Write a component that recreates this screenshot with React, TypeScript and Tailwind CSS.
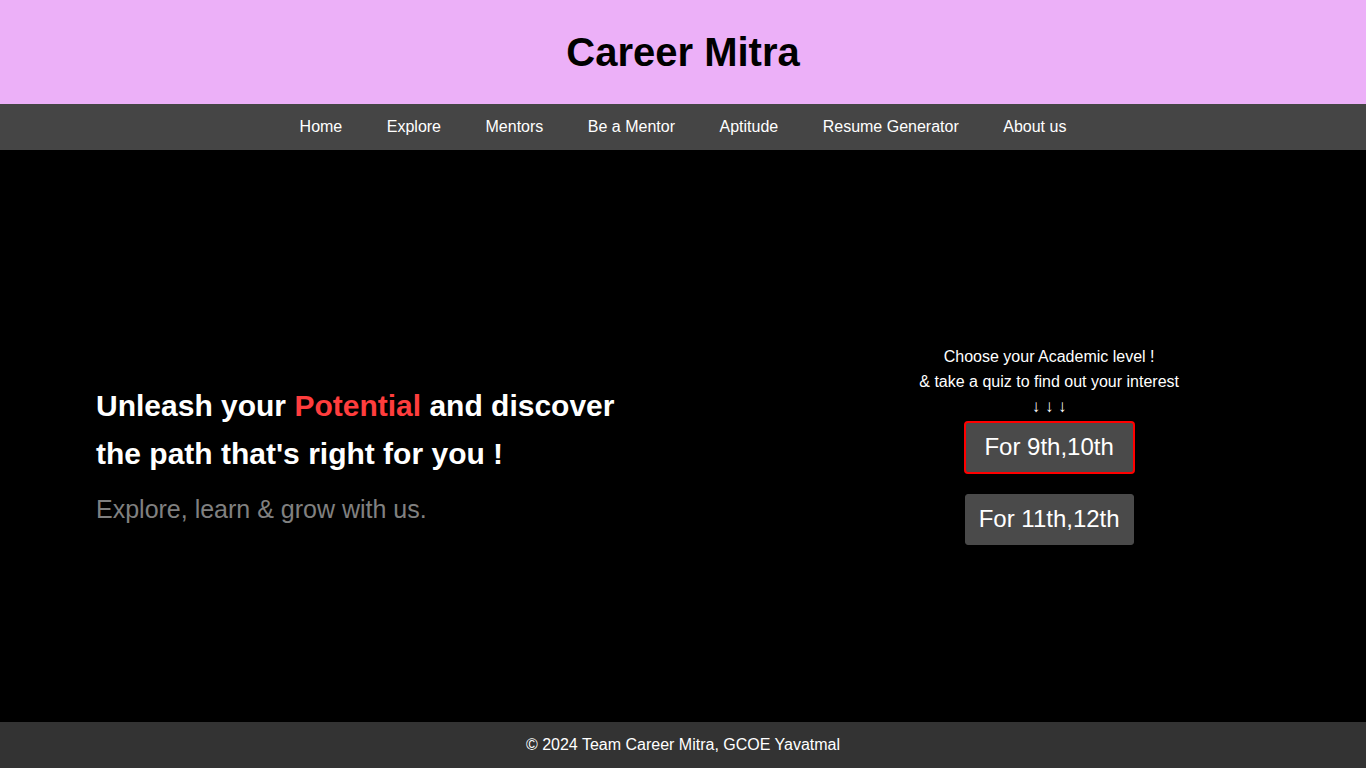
import React from 'react';

const navLinks = ['Home', 'Explore', 'Mentors', 'Be a Mentor', 'Aptitude', 'Resume Generator', 'About us'];

export default function App() {
  return (
    <div className="min-h-screen flex flex-col bg-black font-['Liberation_Sans',Arial,sans-serif]">
      {/* Header */}
      <header className="h-[104px] bg-[#ecb0f8] flex items-center justify-center">
        <h1 className="text-[40px] font-bold text-black leading-none">Career Mitra</h1>
      </header>

      {/* Nav */}
      <nav className="h-[46px] bg-[#454545] flex items-center justify-center gap-[44.5px]">
        {navLinks.map(link => (
          <a key={link} href="#" className="text-white text-base leading-[46px]">
            {link}
          </a>
        ))}
      </nav>

      {/* Hero */}
      <main className="h-[572px] flex items-start justify-between pl-[96px] pr-[187px]">
        <div className="mt-[232px]">
          <h2 className="text-[30px] font-bold text-white leading-[48px]">
            Unleash your <span className="text-[#ff3d3d]">Potential</span> and discover
            <br />
            the path that's right for you !
          </h2>
          <p className="mt-[17px] text-[25px] text-[#808080] leading-[28px]">Explore, learn &amp; grow with us.</p>
        </div>

        <div className="mt-[194px] flex flex-col items-center text-white">
          <p className="text-base leading-[25px]">Choose your Academic level !</p>
          <p className="text-base leading-[25px]">&amp; take a quiz to find out your interest</p>
          <p className="text-[17px] leading-[25px]">↓ ↓ ↓</p>
          <button className="mt-[1.5px] w-[171px] h-[53px] bg-[#4a4a4a] border-2 border-[#ff0000] rounded-[4px] text-white text-[24px]">
            For 9th,10th
          </button>
          <button className="mt-[20px] w-[169px] h-[51px] bg-[#4a4a4a] border border-[#4a4a4a] rounded-[3px] text-white text-[24px]">
            For 11th,12th
          </button>
        </div>
      </main>

      {/* Footer */}
      <footer className="h-[46px] bg-[#333333] flex items-center justify-center">
        <p className="text-white text-base">© 2024 Team Career Mitra, GCOE Yavatmal</p>
      </footer>
    </div>
  );
}
